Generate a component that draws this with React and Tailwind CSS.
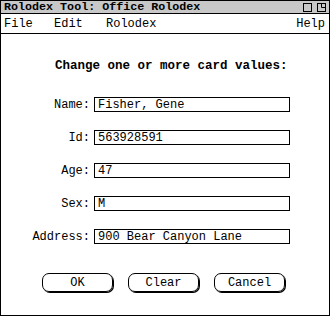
import React from "react";

const rows = [
  ["Name:", "Fisher, Gene"],
  ["Id:", "563928591"],
  ["Age:", "47"],
  ["Sex:", "M"],
  ["Address:", "900 Bear Canyon Lane"],
];

function Btn({ children, className }) {
  return (
    <div
      className={
        "w-[71px] h-[19px] border border-black rounded-[7px] shadow-[1px_1px_0_#000] flex items-center justify-center text-[12px] leading-none text-black " +
        (className || "")
      }
    >
      {children}
    </div>
  );
}

export default function App() {
  return (
    <div className="w-[331px] h-[317px] bg-white font-['Liberation_Mono',monospace] text-black">
      <div className="w-[330px] h-[316px] border border-black flex flex-col">
        <div className="h-[13px] bg-[#c8c8c8] border-b border-black flex items-center justify-between pl-[3px] pr-[3px]">
          <span className="font-bold text-[11.7px] leading-none mt-[1px]">Rolodex Tool: Office Rolodex</span>
          <div className="flex items-center gap-[5px]">
            <svg width="9" height="9" viewBox="0 0 9 9">
              <rect x="0.5" y="0.5" width="8" height="8" fill="none" stroke="#000" />
            </svg>
            <svg width="9" height="9" viewBox="0 0 9 9">
              <rect x="0.5" y="0.5" width="8" height="8" fill="none" stroke="#000" />
              <path d="M4.5 0.5 V4.5 H8.5" fill="none" stroke="#000" />
            </svg>
          </div>
        </div>
        <div className="h-[20px] border-b border-black flex items-center text-[12px] leading-none pl-[3px] pr-[4px]">
          <span className="w-[50px]">File</span>
          <span className="w-[52px]">Edit</span>
          <span>Rolodex</span>
          <span className="ml-auto">Help</span>
        </div>
        <div className="flex flex-col">
          <div className="mt-[24px] h-[16px] flex items-center pl-[54px] font-bold text-[12.5px] leading-none">
            Change one or more card values:
          </div>
          <div className="mt-[23px] flex flex-col gap-[18px]">
            {rows.map(([l, v]) => (
              <div key={l} className="flex items-center h-[15px]">
                <div className="w-[91px] text-right text-[12px] leading-none pr-[2px]">{l}</div>
                <div className="ml-[2px] w-[196px] h-[15px] border border-black flex items-center pl-[3px] text-[12px] leading-none">
                  {v}
                </div>
              </div>
            ))}
          </div>
          <div className="mt-[29px] flex pl-[41px] gap-[15px]">
            <Btn>OK</Btn>
            <Btn>Clear</Btn>
            <Btn>Cancel</Btn>
          </div>
        </div>
      </div>
    </div>
  );
}
